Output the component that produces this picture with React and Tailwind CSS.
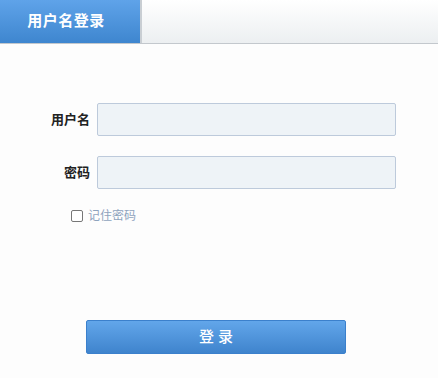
import React from 'react';

const LoginPanel = () => {
  return (
    <div
      className="w-[438px] h-[378px] bg-[#fdfdfd] overflow-hidden"
      style={{ fontFamily: '"Liberation Sans", "Noto Sans CJK SC", sans-serif' }}
    >
      <div className="flex h-[44px] border-b border-[#c3c8cd] bg-gradient-to-b from-[#ffffff] to-[#eceff1]">
        <div className="w-[140px] h-full flex items-center justify-center pr-[8px] pb-[1px] bg-gradient-to-b from-[#5fa3e9] to-[#3e86cf] text-white text-[15px] tracking-[0.5px] font-bold">
          用户名登录
        </div>
        <div className="w-[2px] h-full bg-[#c9ced3]" />
      </div>

      <div className="pt-[59px]">
        <div className="flex items-center h-[33px]">
          <label className="w-[91px] text-right pr-[1px] text-[13px] font-bold text-[#222]">用户名</label>
          <input className="ml-[6px] w-[299px] h-[33px] bg-[#eef3f7] border border-[#bdcadb] rounded-[2px] outline-none" />
        </div>
        <div className="flex items-center h-[33px] mt-[20px]">
          <label className="w-[91px] text-right pr-[1px] text-[13px] font-bold text-[#222]">密码</label>
          <input type="password" className="ml-[6px] w-[299px] h-[33px] bg-[#eef3f7] border border-[#bdcadb] rounded-[2px] outline-none" />
        </div>
        <div className="flex items-center mt-[20px] ml-[71px] h-[14px]">
          <span className="w-[12px] h-[12px] border border-[#777] rounded-[2px] bg-white" />
          <span className="ml-[5px] text-[12px] text-[#8fa3bd]">记住密码</span>
        </div>
      </div>

      <div className="mt-[97px] ml-[86px]">
        <button className="w-[260px] h-[34px] rounded-[2px] border border-[#3b80cc] bg-gradient-to-b from-[#62a6ea] to-[#3f84cd] text-white text-[15px] font-medium">
          登 录
        </button>
      </div>
    </div>
  );
};

export default function App() {
  return <LoginPanel />;
}
